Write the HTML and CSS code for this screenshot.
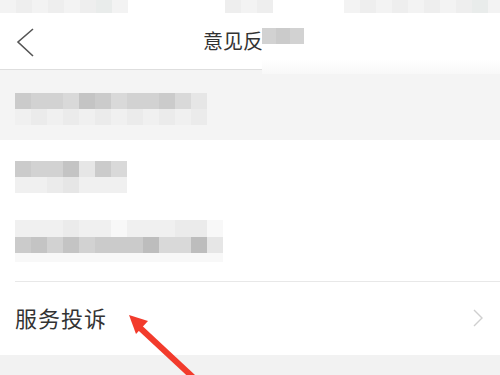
FILE: index.html
```html
<!DOCTYPE html>
<html lang="zh">
<head>
<meta charset="utf-8">
<link rel="stylesheet" href="styles.css">
</head>
<body>
<div class="page">
  <div class="status">
    <div class="mz row1">
      <i class="s1"></i><i class="s2"></i><i class="s1"></i><i class="s2"></i><i class="s1"></i><i class="s2"></i><i class="s3"></i><i class="s1"></i>
    </div>
    <div class="mz row1 gap1">
      <i class="s2"></i><i class="s1"></i><i class="s2"></i>
    </div>
    <div class="mz row1 gap2">
      <i class="s1"></i><i class="s2"></i><i class="s1"></i><i class="s2"></i><i class="s1"></i><i class="s2"></i><i class="s1"></i><i class="s2"></i><i class="s3"></i><i class="s1"></i>
    </div>
  </div>

  <header class="header">
    <svg class="back" width="20" height="32" viewBox="0 0 20 32"><path d="M17 3 L2 16 L17 30" fill="none" stroke="#555" stroke-width="1.6"/></svg>
    <div class="title">
      <span class="title-text">意见反馈</span>
      <div class="title-mask">
        <i class="m3"></i><i class="m2"></i><i class="m3"></i>
      </div>
    </div>
  </header>

  <section class="notice">
    <div class="mz two">
      <i class="m2"></i><i class="l1"></i>
      <i class="m3"></i><i class="l2"></i>
      <i class="m3"></i><i class="l1"></i>
      <i class="m4"></i><i class="l2"></i>
      <i class="m1"></i><i class="l1"></i>
      <i class="m2"></i><i class="l2"></i>
      <i class="m4"></i><i class="l1"></i>
      <i class="m3"></i><i class="l2"></i>
      <i class="m3"></i><i class="l1"></i>
      <i class="m2"></i><i class="l2"></i>
      <i class="m4"></i><i class="l1"></i>
      <i class="l3"></i><i class="l2"></i>
    </div>
  </section>

  <div class="list">
    <div class="item item-a">
      <div class="mz two">
        <i class="m2"></i><i class="l1"></i>
        <i class="m3"></i><i class="l1"></i>
        <i class="m3"></i><i class="l2"></i>
        <i class="m1"></i><i class="l3"></i>
        <i class="l3"></i><i class="l1"></i>
        <i class="m2"></i><i class="l1"></i>
        <i class="m4"></i><i class="l1"></i>
      </div>
    </div>
    <div class="item item-b">
      <div class="mz three">
        <i class="l1"></i><i class="m2"></i><i class="l0"></i>
        <i class="l1"></i><i class="m1"></i><i class="l0"></i>
        <i class="l1"></i><i class="m3"></i><i class="l0"></i>
        <i class="l2"></i><i class="m1"></i><i class="l0"></i>
        <i class="l1"></i><i class="m3"></i><i class="l0"></i>
        <i class="l1"></i><i class="m2"></i><i class="l0"></i>
        <i class="l0"></i><i class="m2"></i><i class="l0"></i>
        <i class="l1"></i><i class="m2"></i><i class="l0"></i>
        <i class="l1"></i><i class="m0"></i><i class="l0"></i>
        <i class="l1"></i><i class="m4"></i><i class="l0"></i>
        <i class="l2"></i><i class="m4"></i><i class="l0"></i>
        <i class="l2"></i><i class="m0"></i><i class="l0"></i>
        <i class="l0"></i><i class="l3"></i><i class="l0"></i>
      </div>
    </div>
    <div class="item item-c">
      <span class="label">服务投诉</span>
      <svg class="chev" width="12" height="20" viewBox="0 0 12 20"><path d="M2 2 L10 10 L2 18" fill="none" stroke="#cfcfcf" stroke-width="1.4"/></svg>
    </div>
  </div>
  <div class="footer"></div>

  <svg class="arrow" width="500" height="375" viewBox="0 0 500 375">
    <line x1="138" y1="326" x2="196" y2="380" stroke="#f23b2c" stroke-width="6"/>
    <polygon points="129,315 148,321 136,334" fill="#f23b2c"/>
  </svg>
</div>
</body>
</html>
```
FILE: styles.css
```css
* { box-sizing: border-box; margin: 0; padding: 0; }
body {
  width: 500px;
  height: 375px;
  overflow: hidden;
  background: #fff;
  font-family: "Noto Sans CJK SC", "Noto Sans", sans-serif;
}
.page { position: relative; width: 500px; height: 375px; overflow: hidden; }

.mz { display: grid; grid-auto-flow: column; grid-auto-columns: 16px; }
.mz i { display: block; }
.mz.row1 { grid-template-rows: 13px; }
.mz.two { grid-template-rows: 16px 16px; }
.mz.three { grid-template-rows: 17px 16px 9px; }

.s1 { background: #f3f3f3; }
.s2 { background: #eeeeee; }
.s3 { background: #e9eceb; }

.m0 { background: #bdbdbd; }
.m1 { background: #c4c4c4; }
.m2 { background: #cbcbcb; }
.m3 { background: #d2d2d2; }
.m4 { background: #d9d9d9; }
.l0 { background: #f8f8f8; }
.l1 { background: #f0f0f0; }
.l2 { background: #ebebeb; }
.l3 { background: #e6e6e6; }

.status {
  height: 13px;
  display: flex;
  background: #fff;
}
.status .gap1 { margin-left: 97px; }
.status .gap2 { margin-left: 71px; }

.header {
  height: 57px;
  display: flex;
  align-items: center;
  padding-left: 16px;
  border-bottom: 1px solid #dedede;
  background: #fff;
}
.back { display: block; margin-top: 2px; }
.title {
  position: relative;
  margin-left: 167px;
  margin-top: -2px;
  font-size: 20px;
  color: #333;
}
.title-mask {
  position: absolute;
  left: 59px;
  top: 2px;
  width: 240px;
  height: 46px;
  display: flex;
  background: linear-gradient(#fff 0, #fff 68%, #f8f8f8 100%);
}
.title-mask i { display: block; width: 14px; height: 16px; }

.notice {
  height: 70px;
  background: #f4f4f4;
  padding: 23px 0 0 15px;
}

.list { background: #fff; }
.item {
  display: flex;
  align-items: center;
  padding-left: 15px;
}
.item-a { height: 70px; padding-top: 4px; }
.item-b {
  height: 72px;
  align-items: flex-start;
  padding-top: 10px;
  border-bottom: 1px solid #e8e8e8;
  margin-left: 15px;
  padding-left: 0;
}
.item-c {
  height: 73px;
  justify-content: space-between;
  padding-right: 16px;
}
.label {
  font-size: 22px;
  color: #333;
  letter-spacing: 1px;
  margin-top: -3px;
}
.chev { display: block; margin-top: -2px; }

.footer { height: 20px; background: #f2f2f2; }

.arrow { position: absolute; left: 0; top: 0; }
```
